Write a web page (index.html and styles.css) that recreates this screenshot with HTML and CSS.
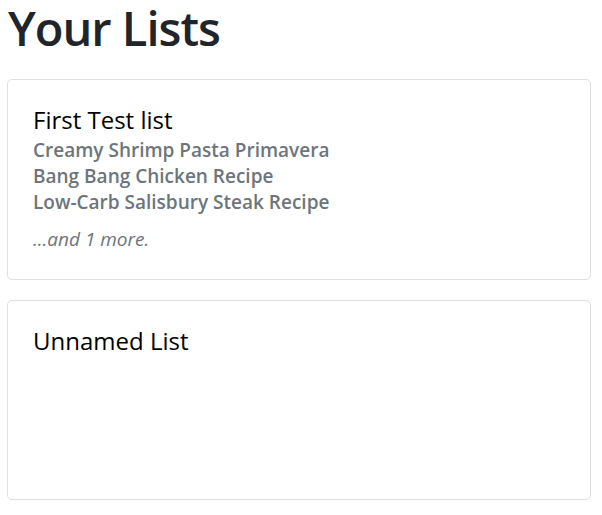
FILE: index.html
```html
<!DOCTYPE html>
<html>
<head>
<meta charset="utf-8">
<link rel="stylesheet" href="styles.css">
</head>
<body>
<main class="page">
  <h1 class="page-title">Your Lists</h1>
  <section class="card">
    <h4 class="card-title">First Test list</h4>
    <ul class="items">
      <li>Creamy Shrimp Pasta Primavera</li>
      <li>Bang Bang Chicken Recipe</li>
      <li>Low-Carb Salisbury Steak Recipe</li>
    </ul>
    <p class="more">...and 1 more.</p>
  </section>
  <section class="card">
    <h4 class="card-title">Unnamed List</h4>
  </section>
</main>
</body>
</html>
```
FILE: styles.css
```css
html, body {
  margin: 0;
  padding: 0;
  background: #fff;
}
body {
  font-family: "Open Sans", "Noto Sans", sans-serif;
  color: #212529;
}
.page {
  width: 584px;
  padding: 0 0 0 7px;
  display: flex;
  flex-direction: column;
  gap: 20px;
}
.page-title {
  margin: 0 0 1px 1px;
  font-size: 47px;
  line-height: 57.6px;
  font-weight: 600;
  letter-spacing: -1px;
  color: #212529;
}
.card {
  border: 1px solid #dfdfdf;
  border-radius: 5px;
  padding: 26px 25px 26px;
  min-height: 146px;
}
.card-title {
  margin: 0 0 3px;
  font-size: 24px;
  line-height: 28.8px;
  font-weight: 400;
  color: #000;
}
.items {
  list-style: none;
  margin: 0 0 11px;
  padding: 0;
  font-size: 19px;
  line-height: 26px;
  font-weight: 600;
  color: #6c757d;
}
.more {
  margin: 0;
  font-size: 19px;
  line-height: 27px;
  font-style: italic;
  color: #6c757d;
}
```
